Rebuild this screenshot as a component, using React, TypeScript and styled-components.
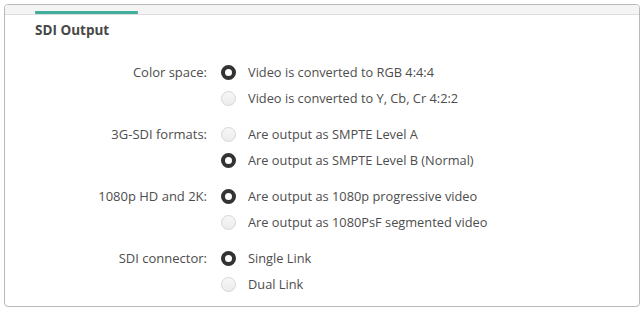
import React from "react";
import styled, { createGlobalStyle } from "styled-components";

const Global = createGlobalStyle`
  html, body { margin: 0; padding: 0; background: #ffffff; }
  body { font-family: "Open Sans", "Liberation Sans", Arial, sans-serif; }
`;

const Panel = styled.div`
  margin: 4px 3px 2px 4px;
  height: 303px;
  box-sizing: border-box;
  border: 1px solid #b9b9b9;
  border-radius: 4px;
  overflow: hidden;
  background: #fff;
  display: flex;
  flex-direction: column;
`;

const TabStrip = styled.div`
  height: 9px;
  background: #f4f4f4;
  border-bottom: 1px solid #dcdcdc;
  display: flex;
  align-items: flex-end;
  padding-left: 30px;
`;

const TabIndicator = styled.div`
  width: 103px;
  height: 3px;
  background: #3fae9a;
  border-radius: 1px;
`;

const Heading = styled.h2`
  margin: 6px 0 0 30px;
  font-size: 13.5px;
  line-height: 18px;
  font-weight: 700;
  color: #474747;
`;

const Groups = styled.div`
  margin-top: 20px;
  display: flex;
  flex-direction: column;
  gap: 10px;
`;

const Group = styled.div`
  display: flex;
  align-items: flex-start;
`;

const Label = styled.div`
  width: 202px;
  text-align: right;
  font-size: 13px;
  line-height: 26px;
  color: #4d4d4d;
`;

const Options = styled.div`
  margin-left: 14px;
  display: flex;
  flex-direction: column;
`;

const Option = styled.div`
  height: 26px;
  display: flex;
  align-items: center;
  gap: 12px;
  font-size: 12.8px;
  color: #4d4d4d;
`;

const Radio = styled.span<{ $on: boolean }>`
  width: 15px;
  height: 15px;
  box-sizing: border-box;
  border-radius: 50%;
  flex: none;
  border: ${(p) => (p.$on ? "4px solid #333333" : "1px solid #d6d6d6")};
  background: ${(p) =>
    p.$on ? "#ffffff" : "linear-gradient(#f7f7f7, #ececec)"};
`;

const data = [
  {
    label: "Color space:",
    options: ["Video is converted to RGB 4:4:4", "Video is converted to Y, Cb, Cr 4:2:2"],
    sel: 0,
  },
  {
    label: "3G-SDI formats:",
    options: ["Are output as SMPTE Level A", "Are output as SMPTE Level B (Normal)"],
    sel: 1,
  },
  {
    label: "1080p HD and 2K:",
    options: ["Are output as 1080p progressive video", "Are output as 1080PsF segmented video"],
    sel: 0,
  },
  {
    label: "SDI connector:",
    options: ["Single Link", "Dual Link"],
    sel: 0,
  },
];

export default function App() {
  return (
    <>
      <Global />
      <Panel>
        <TabStrip>
          <TabIndicator />
        </TabStrip>
        <Heading>SDI Output</Heading>
        <Groups>
          {data.map((g) => (
            <Group key={g.label}>
              <Label>{g.label}</Label>
              <Options>
                {g.options.map((o, i) => (
                  <Option key={o}>
                    <Radio $on={i === g.sel} />
                    {o}
                  </Option>
                ))}
              </Options>
            </Group>
          ))}
        </Groups>
      </Panel>
    </>
  );
}
